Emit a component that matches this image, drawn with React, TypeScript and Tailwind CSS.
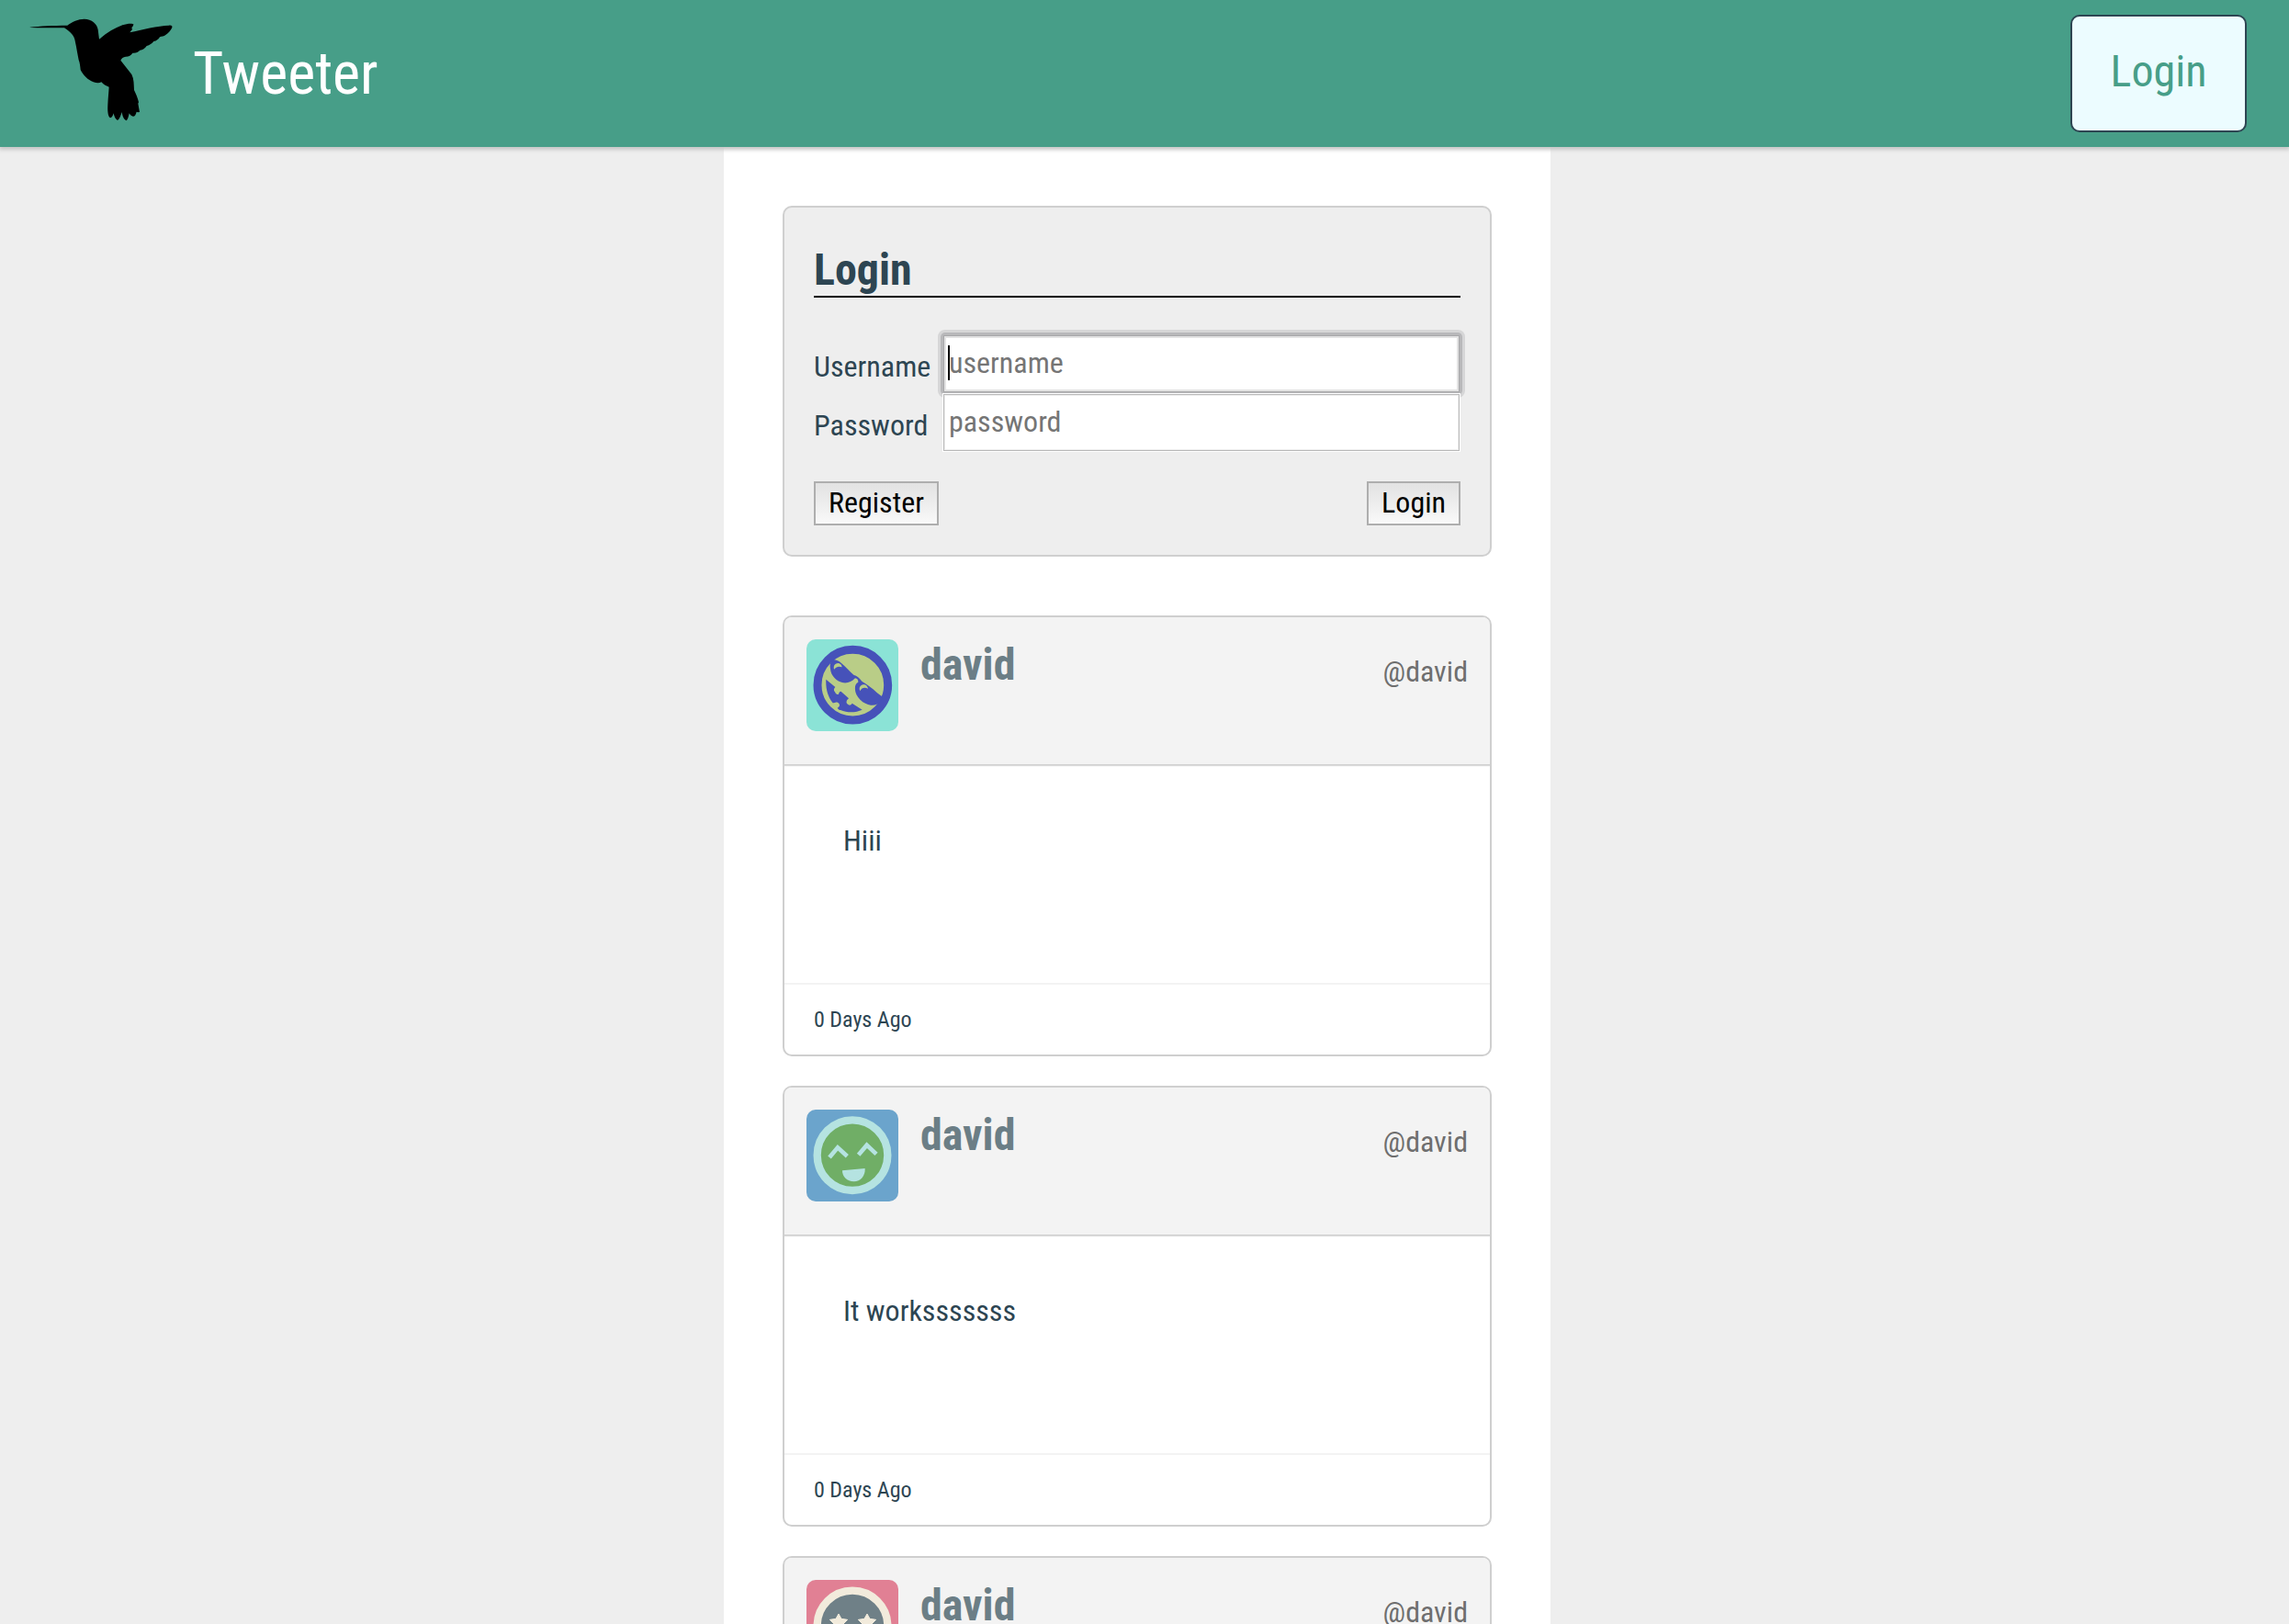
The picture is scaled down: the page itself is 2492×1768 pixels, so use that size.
import type { ReactNode } from 'react';

function Hummingbird() {
  return (
    <svg viewBox="90 50 480 350" className="ml-[30px] mt-[16.67px] h-[116.67px] w-[160px]">
      <path
        fill="#000"
        d="M98 88 C130 84 172 82 220 82 C236 70 255 61 275 61 C300 62 317 76 320 96 L324 127
        C350 105 375 90 400 81 C414 76 432 75 436 78 L435 83 L430 90 L432 95 L424 105
        C465 96 515 83 552 82 C560 81 564 84 562 89 C558 98 550 107 540 114 C536 118 528 118 522 120
        C518 127 511 133 502 134 C496 141 489 147 479 149 C474 157 466 162 457 163
        C451 170 443 173 433 172 C428 180 421 184 411 184 C402 185 397 190 394 196
        L430 242 C438 258 437 275 438 293 C444 306 450 319 453 333 L451 337 L456 365 L450 366 L446 364
        C444 373 440 379 435 379 C429 378 425 374 422 369 C420 380 417 390 413 393 C405 390 400 379 398 365
        C395 374 391 388 384 392 C377 389 373 380 371 369 C369 376 366 383 360 384 C352 379 351 360 352 342
        C353 320 355 300 356 283 C348 280 339 276 331 267 C324 271 315 270 305 267
        C287 260 272 245 263 227 C262 216 261 205 257 195 C253 175 250 155 246 137
        C243 115 232 105 210 90 C180 89 140 91 98 89 Z"
      />
    </svg>
  );
}

function CoolAvatar() {
  return (
    <svg viewBox="0 0 300 300" className="size-[100px] shrink-0 rounded-[10px] bg-[#8be3d6]">
      <circle cx="151" cy="149" r="115" fill="#b9cd87" stroke="#4652b9" strokeWidth="27" />
      <g fill="#4652b9">
        <path d="M82 68 C93 65 104 69 114 78 C126 88 140 104 154 116 C165 119 173 126 181 137 C198 147 216 160 229 173 C239 181 244 184 248 187 C248 195 243 200 238 205 C235 213 224 216 210 215 C189 213 165 193 160 172 C157 156 159 144 169 140 C169 132 166 128 159 127 C148 138 136 144 120 142 C99 138 79 119 78 96 C76 87 77 78 82 68 Z" />
        <path d="M64 131 L94 156 C89 162 88 166 93 172 C96 179 100 181 105 179 C108 170 111 168 116 173 L138 193 C131 199 128 205 133 211 C139 216 144 217 149 209 L182 230 C162 239 137 242 111 231 C107 231 104 229 101 224 C110 219 110 212 103 207 C96 203 92 208 86 208 C72 190 62 165 64 131 Z" />
      </g>
      <path d="M89 94 C89 83 96 76 107 79 C113 81 115 85 116 91 C107 88 99 87 91 98 Z" fill="#b9cd87" />
      <path d="M173 163 C173 150 184 146 193 149 C198 152 201 157 201 161 C190 156 181 157 175 169 Z" fill="#b9cd87" />
    </svg>
  );
}

function HappyAvatar() {
  return (
    <svg viewBox="0 0 300 300" className="size-[100px] shrink-0 rounded-[10px] bg-[#6ba4cc]">
      <circle cx="150" cy="149" r="115" fill="#70ae66" stroke="#b5e3e1" strokeWidth="25" />
      <path d="M75 156 L102 124 L133 152 M170 148 L197 116 L228 145" fill="none" stroke="#b5e3e1" strokeWidth="14" />
      <path d="M117 199 L191 192 C193 216 176 235 155 235 C132 235 117 219 117 199 Z" fill="#b5e3e1" />
    </svg>
  );
}

function StarAvatar() {
  return (
    <svg viewBox="0 0 300 300" className="size-[100px] shrink-0 rounded-[10px] bg-[#e18094]">
      <circle cx="150" cy="150" r="115" fill="#6f8087" stroke="#f2ebdc" strokeWidth="25" />
      <g fill="#f2ebdc" stroke="#f2ebdc" strokeWidth="3" strokeLinejoin="round">
        <path d="M105 111 L114 127 L134 130 L120 144 L123 164 L105 155 L87 164 L90 144 L76 130 L96 127 Z" />
        <path d="M198 111 L207 127 L227 130 L213 144 L216 164 L198 155 L180 164 L183 144 L169 130 L189 127 Z" />
        <path d="M112 195 H190 C188 220 172 235 151 235 C130 235 114 220 112 195 Z" />
      </g>
    </svg>
  );
}

const tweets: { avatar: ReactNode; text: string }[] = [
  { avatar: <CoolAvatar />, text: 'Hiii' },
  { avatar: <HappyAvatar />, text: 'It worksssssss' },
  { avatar: <StarAvatar />, text: '' },
];

function Tweet({ avatar, text }: { avatar: ReactNode; text: string }) {
  return (
    <article className="flex h-[480px] shrink-0 flex-col overflow-hidden rounded-[10px] border-2 border-[#cfcfcf] bg-white">
      <header className="z-1 flex h-[160px] shrink-0 items-start bg-[#f3f3f3] px-6 pt-6 shadow-[0_1px_0_#cfcfcf,0_2px_1px_#dcdcdc]">
        {avatar}
        <h2 className="ml-6 text-[48px] leading-[56px] font-bold text-[#6b7e86]">david</h2>
        <span className="mt-4 ml-auto text-[32px] leading-[38px] text-[#6e6e6e]">@david</span>
      </header>
      <p className="grow px-16 pt-16 text-[32px] leading-[38px]">{text}</p>
      <footer className="h-[78px] shrink-0 border-t-2 border-[#f3f3f3] px-8 pt-6 text-[24px] leading-[28px]">0 Days Ago</footer>
    </article>
  );
}

const inputBase =
  'block h-16 w-[564px] bg-white px-[6px] pt-px pb-[3px] text-[32px] outline-none placeholder:text-[#757575]';
const buttonBase =
  'h-12 border-2 border-[#aeaeae] bg-linear-to-b from-[#e2e2e2] to-[#f9f9f9] px-[14px] pb-[2px] text-[32px] leading-[38px] text-black';

export default function App() {
  return (
    <div className="flex h-[1768px] flex-col overflow-hidden bg-[#eeeeee] text-[#2d4552] [font-family:'Roboto_Condensed',Roboto,sans-serif]">
      <nav className="z-10 flex h-[160px] shrink-0 items-start bg-[#479e88] shadow-[0_2px_4px_1px_#c6c6c6]">
        <Hummingbird />
        <span className="mt-[43px] ml-5 text-[64px] leading-[76px] text-white">Tweeter</span>
        <button className="mt-4 mr-[46px] ml-auto h-32 w-48 rounded-[10px] border-2 border-[#2d4552] bg-[#ecfcff] pb-1 text-[48px] leading-[56px] text-[#479e88]">
          Login
        </button>
      </nav>
      <main className="ml-[788px] flex w-[900px] grow flex-col bg-white px-16 pt-16">
        <form className="h-[382px] shrink-0 rounded-[10px] border-2 border-[#cfcfcf] bg-[#eeeeee] px-8 pt-10">
          <h1 className="h-[58px] border-b-2 border-black text-[48px] leading-[56px] font-bold">Login</h1>
          <div className="mt-10 flex h-16 items-center justify-between">
            <label htmlFor="username" className="pt-[5px] text-[32px]">Username</label>
            <div className="rounded-[3px] shadow-[0_0_0_2px_#b8b8ba,0_0_0_5px_#d6d6d7]">
              <input
                id="username"
                placeholder="username"
                className={`${inputBase} border border-[#b8b8ba] shadow-[inset_0_0_0_1px_#a8a8aa,inset_0_0_0_3px_#e3e3e3]`}
              />
            </div>
          </div>
          <div className="relative flex h-16 items-center justify-between">
            <span className="absolute -top-[52px] left-[146px] h-[38px] w-[2px] bg-black" />
            <label htmlFor="password" className="pt-[5px] text-[32px]">Password</label>
            <input
              id="password"
              placeholder="password"
              className={`${inputBase} border border-white shadow-[inset_0_0_0_1px_#b8b8b8,inset_0_0_0_2px_#eeeeee]`}
            />
          </div>
          <div className="mt-8 flex justify-between">
            <button type="button" className={buttonBase}>Register</button>
            <button type="button" className={buttonBase}>Login</button>
          </div>
        </form>
        <section className="mt-16 flex flex-col gap-8">
          {tweets.map((tweet, i) => (
            <Tweet key={i} {...tweet} />
          ))}
        </section>
      </main>
    </div>
  );
}
